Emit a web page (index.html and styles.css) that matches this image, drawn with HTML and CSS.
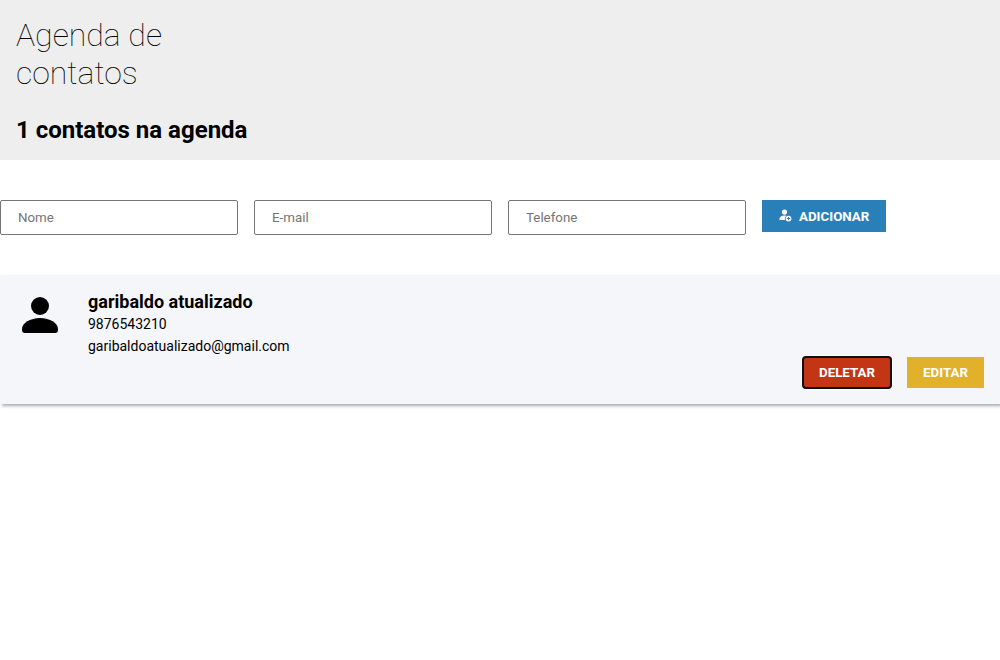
FILE: index.html
```html
<!DOCTYPE html>
<html lang="pt-BR">
<head>
<meta charset="utf-8">
<title>Agenda de contatos</title>
<link rel="stylesheet" href="styles.css">
</head>
<body>
<header class="header">
  <h1 class="title">Agenda de<br>contatos</h1>
  <h2 class="count">1 contatos na agenda</h2>
</header>
<form class="form">
  <input class="field" type="text" placeholder="Nome">
  <input class="field" type="text" placeholder="E-mail">
  <input class="field" type="text" placeholder="Telefone">
  <button class="button add" type="button">
    <svg class="add-icon" viewBox="0 0 13 13" fill="currentColor"><path fill-rule="evenodd" d="M5.500 0.500a2.600 2.600 0 1 0 0 5.200a2.600 2.600 0 0 0 0-5.200zM5.500 6.500C2.500 6.500 0.500 7.900 0.500 9.600V11H6a3.700 3.700 0 0 1 1.500-4.200zM9.500 6.700a2.900 2.900 0 1 0 0 5.800a2.900 2.900 0 0 0 0-5.800zM9 7.900h1v1.200h1.200v1H10v1.200H9v-1.200H7.800v-1H9z"/></svg>
    <span>ADICIONAR</span>
  </button>
</form>
<main class="card">
  <svg class="avatar" viewBox="0 0 36 36"><circle cx="18" cy="9" r="9"/><path d="M0 32c0-6 8-11 18-11s18 5 18 11v1a3 3 0 0 1-3 3H3a3 3 0 0 1-3-3z"/></svg>
  <div class="details">
    <h3 class="name">garibaldo atualizado</h3>
    <p class="line">9876543210</p>
    <p class="line">garibaldoatualizado@gmail.com</p>
  </div>
  <div class="actions">
    <button class="button delete" type="button">DELETAR</button>
    <button class="button edit" type="button">EDITAR</button>
  </div>
</main>
</body>
</html>
```
FILE: styles.css
```css
* { box-sizing: border-box; margin: 0; padding: 0; }
body { min-height: 100vh; font-family: Roboto, sans-serif; color: #000; background: #fff; }
.header { height: 160px; padding: 16px; background: #eee; }
.title { font-size: 32px; font-weight: 100; line-height: 38px; }
.count { margin-top: 24px; font-size: 24px; line-height: 28px; font-weight: 700; }
.form { display: flex; align-items: flex-start; gap: 16px; margin: 40px 0; }
.field { width: 238px; height: 35px; padding: 8px 17px; border: 1px solid #767676; border-radius: 2px; font: 13.333px Roboto, sans-serif; }
.button { border: 0; padding: 8px 16px; font: 700 13.333px/15px Roboto, sans-serif; color: #fff; }
.add { display: flex; align-items: center; gap: 7px; width: 124px; height: 32px; background: #2980b9; }
.add-icon { width: 13px; height: 13px; margin: -1px 0 0 1px; flex: none; }
.card { display: flex; height: 129px; padding: 16px; background: #f5f6fa; box-shadow: 2px 2px 3px rgba(0, 0, 0, 0.33); }
.avatar { width: 36px; height: 36px; margin: 6px 30px 0 6px; }
.name { font-size: 18px; line-height: 21px; }
.line { font-size: 14px; line-height: 16px; margin-top: 4px; }
.line + .line { margin-top: 6px; }
.actions { display: flex; align-self: flex-end; gap: 16px; margin-left: auto; }
.delete { background: #c23616; outline: auto 1px #101010; }
.edit { background: #e1b12c; }
```
